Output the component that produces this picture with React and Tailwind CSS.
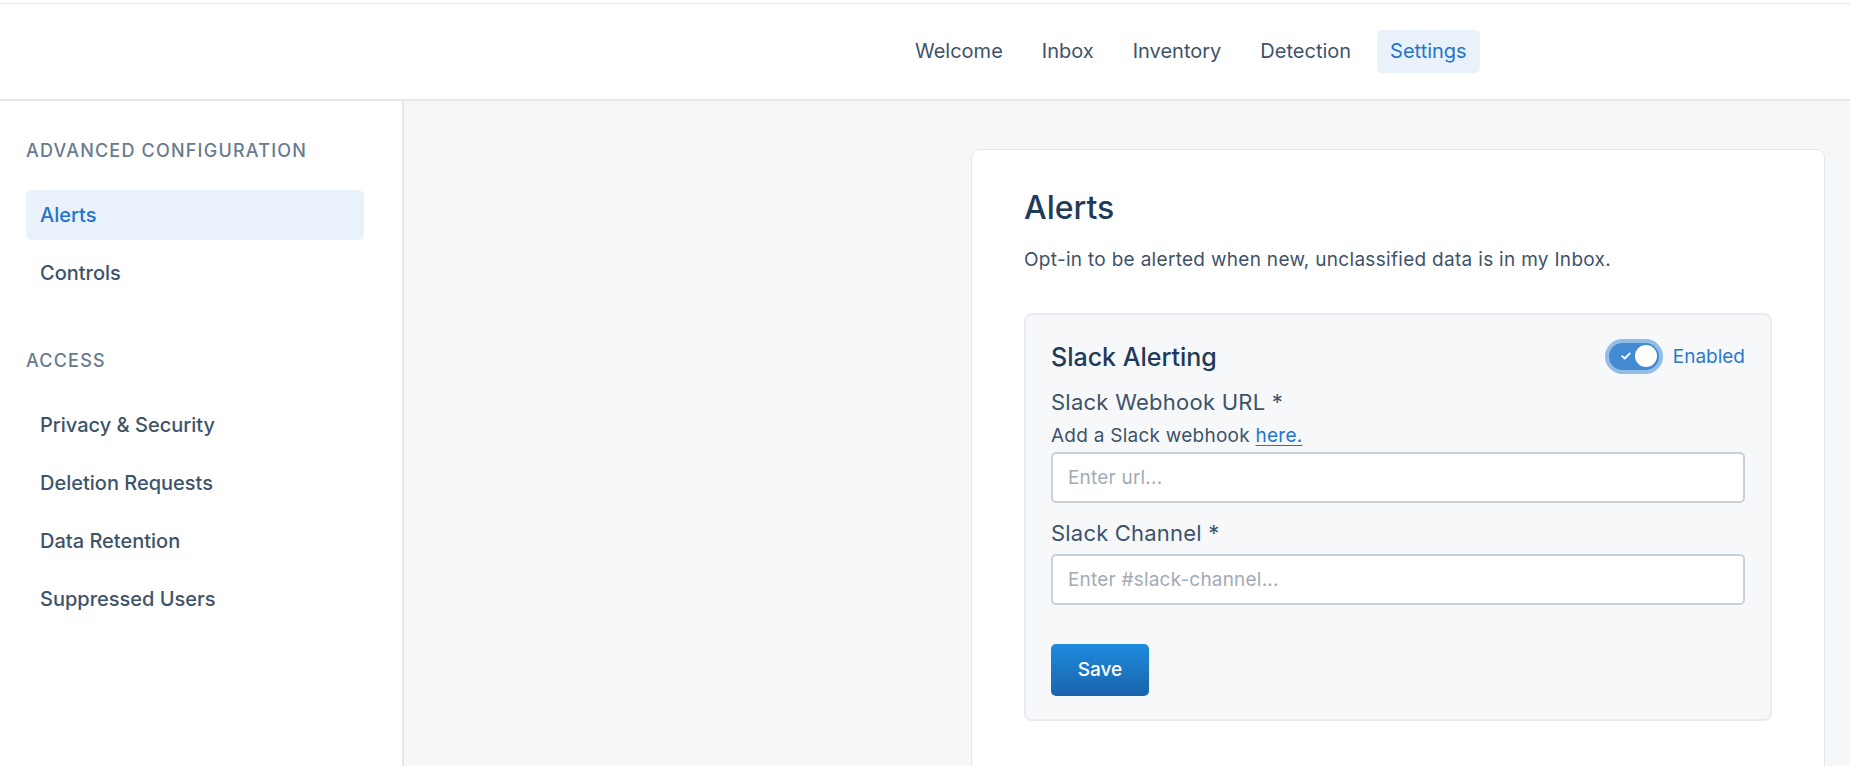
import React from 'react';

const navItems = ['Welcome', 'Inbox', 'Inventory', 'Detection', 'Settings'];

const sections = [
    { title: 'ADVANCED CONFIGURATION', items: ['Alerts', 'Controls'] },
    { title: 'ACCESS', items: ['Privacy & Security', 'Deletion Requests', 'Data Retention', 'Suppressed Users'] },
];

function Toggle() {
    return (
        <div className="flex items-center gap-[10px]">
            <div className="w-[58px] h-[35px] rounded-full bg-[#93bce6] p-[4px]">
                <div className="relative w-full h-full rounded-full bg-[#428bd3] flex items-center">
                    <svg className="absolute left-[12px] top-[9px]" width="10" height="8" viewBox="0 0 10 8" fill="none">
                        <path d="M1.2 4.2 3.7 6.5 8.8 1.4" stroke="white" strokeWidth="1.8" strokeLinecap="round" strokeLinejoin="round" />
                    </svg>
                    <div className="absolute right-[2px] top-[2px] w-[22px] h-[22px] rounded-full bg-white" />
                </div>
            </div>
            <span className="text-[19px] leading-[24px] text-[#2a78cc]">Enabled</span>
        </div>
    );
}

export default function App() {
    return (
        <div className="h-screen overflow-hidden bg-white text-[#3e5369]" style={{ fontFamily: 'Inter, "Noto Sans", sans-serif' }}>
            {/* Header */}
            <div className="pt-[3px]">
                <header className="h-[98px] border-t border-b-2 border-[#e4e7eb] bg-white flex items-center pl-[902px]">
                    <nav className="flex items-center gap-[13px] -mt-[1px]">
                        {navItems.map((item) => (
                            <a
                                key={item}
                                className={
                                    item === 'Settings'
                                        ? 'h-[43px] px-[13px] flex items-center rounded-[5px] bg-[#e9f1fa] text-[#1f74cf] text-[20px]'
                                        : 'h-[43px] px-[13px] flex items-center rounded-[5px] text-[#3e5369] text-[20px]'
                                }
                            >
                                {item}
                            </a>
                        ))}
                    </nav>
                </header>
            </div>

            <div className="flex h-full">
                {/* Sidebar */}
                <aside className="w-[404px] shrink-0 border-r-2 border-[#e4e7eb] bg-white pt-[38px] pl-[26px] pr-[38px]">
                    {sections.map((section, si) => (
                        <div key={section.title} className={si > 0 ? 'mt-[51px]' : ''}>
                            <div className="h-[24px] leading-[24px] text-[18px] font-medium tracking-[1.2px] text-[#697b8e] mb-[27px]">
                                {section.title}
                            </div>
                            <div className="flex flex-col gap-[8px]">
                                {section.items.map((item) => (
                                    <div
                                        key={item}
                                        className={
                                            item === 'Alerts'
                                                ? 'h-[50px] px-[14px] flex items-center rounded-[6px] bg-[#e9f1fa] text-[#1f74cf] text-[20px] font-medium'
                                                : 'h-[50px] px-[14px] flex items-center rounded-[6px] text-[#3e5369] text-[20px] font-medium'
                                        }
                                    >
                                        {item}
                                    </div>
                                ))}
                            </div>
                        </div>
                    ))}
                </aside>

                {/* Main */}
                <main className="flex-1 bg-[#f6f7f9] flex justify-end pr-[25px] pt-[48px]">
                    <div className="w-[854px] h-[700px] bg-white border border-[#e3e6ea] rounded-[9px] pt-[38px] px-[52px]">
                        <h1 className="text-[32px] leading-[40px] text-[#1f3b5a] font-medium">Alerts</h1>
                        <p className="mt-[18px] text-[19px] leading-[28px] tracking-[0.3px] text-[#3e5369]">
                            Opt-in to be alerted when new, unclassified data is in my Inbox.
                        </p>

                        {/* Slack panel */}
                        <div className="mt-[39px] bg-[#f7f8fa] border-2 border-[#e8ebef] rounded-[8px] pt-[24px] pb-[23px] px-[25px]">
                            <div className="h-[35px] flex items-center justify-between">
                                <h2 className="text-[25px] leading-[32px] text-[#1f3b5a] font-medium">Slack Alerting</h2>
                                <Toggle />
                            </div>

                            <label className="block mt-[13px] text-[22px] leading-[30px] tracking-[0.25px] text-[#3e5369]">Slack Webhook URL *</label>
                            <div className="mt-[7px] text-[19px] leading-[24px] tracking-[0.25px] text-[#3e5369]">
                                Add a Slack webhook{' '}
                                <a className="text-[#1f74cf] underline underline-offset-[3px]">here.</a>
                            </div>
                            <input
                                className="mt-[4px] block w-full h-[51px] bg-white border-2 border-[#c9d0d8] rounded-[5px] px-[15px] text-[19px] tracking-[0.2px] placeholder-[#a3abb7] outline-none"
                                placeholder="Enter url..."
                            />

                            <label className="block mt-[15px] text-[22px] leading-[30px] tracking-[0.2px] text-[#3e5369]">Slack Channel *</label>
                            <input
                                className="mt-[6px] block w-full h-[51px] bg-white border-2 border-[#c9d0d8] rounded-[5px] px-[15px] text-[19px] tracking-[0.2px] placeholder-[#a3abb7] outline-none"
                                placeholder="Enter #slack-channel..."
                            />

                            <button className="mt-[39px] w-[98px] h-[52px] rounded-[5px] bg-gradient-to-b from-[#1d8bdc] to-[#1a64ad] text-white text-[19px] font-medium">
                                Save
                            </button>
                        </div>
                    </div>
                </main>
            </div>
        </div>
    );
}
